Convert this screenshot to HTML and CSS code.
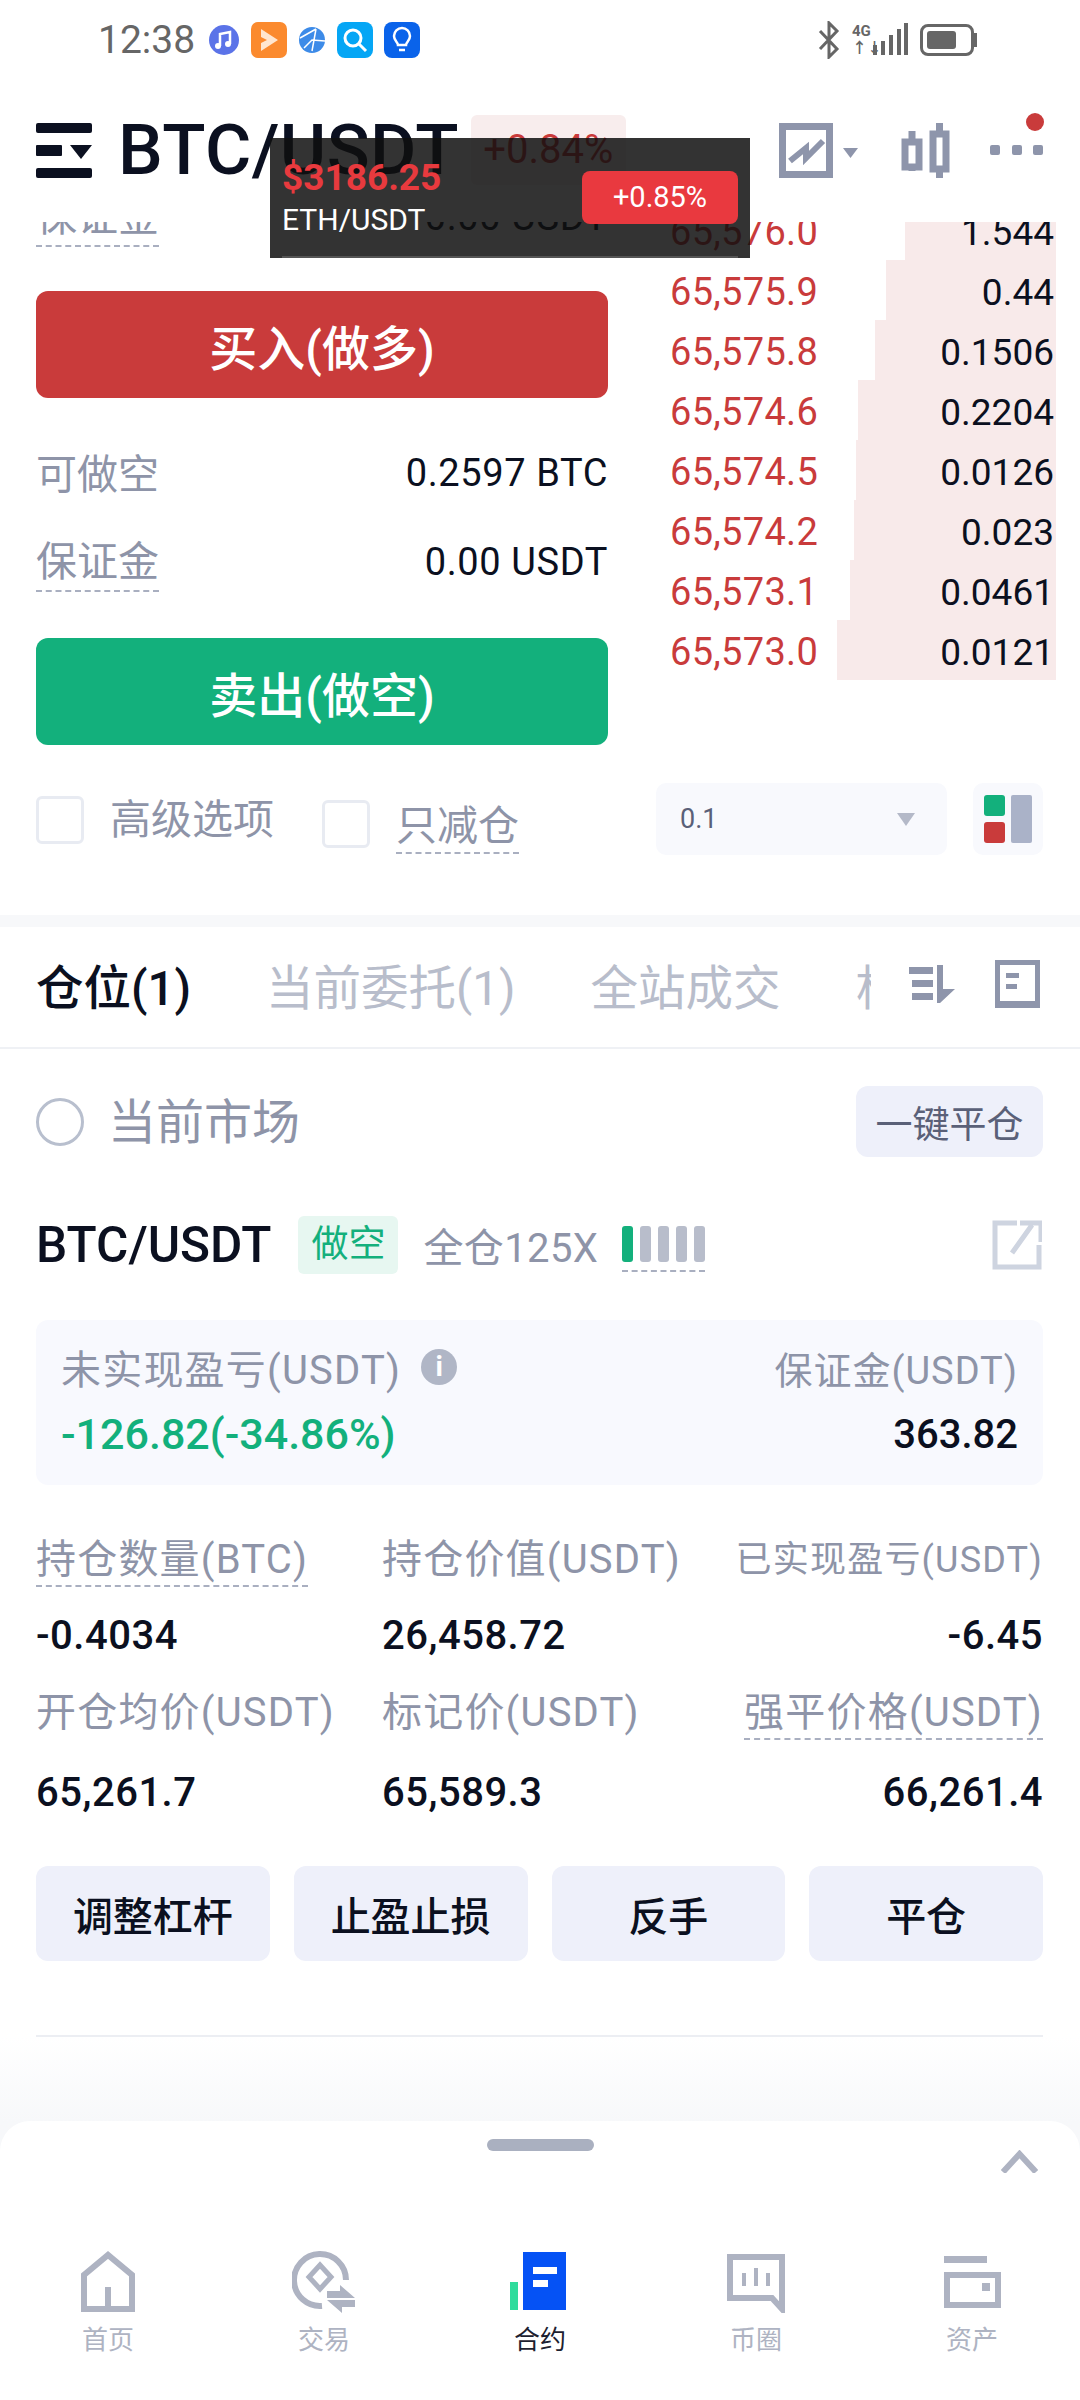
FILE: index.html
```html
<!DOCTYPE html>
<html lang="zh-CN">
<head>
    <meta charset="UTF-8">
    <meta name="viewport" content="width=device-width, initial-scale=1.0">
    <title>BTC/USDT 合约</title>
    <link rel="stylesheet" href="styles.css">
</head>
<body>
    <div class="status-bar">
        <span class="clock">12:38</span>
        <div class="app-icons">
            <svg width="32" height="36" viewBox="0 0 32 36"><circle cx="16" cy="18" r="15" fill="#5b73e8"/><path d="M12 24V12l10-2v12" fill="none" stroke="#fff" stroke-width="2.500"/><circle cx="10" cy="24" r="3" fill="#fff"/><circle cx="20" cy="22" r="3" fill="#fff"/></svg>
            <svg width="36" height="36" viewBox="0 0 36 36"><rect width="36" height="36" rx="7" fill="#fb8a2e"/><path d="M10 7l17 11-17 11V21l6-3-6-3z" fill="#ffe6cf"/></svg>
            <svg width="28" height="36" viewBox="0 0 28 36"><circle cx="14" cy="18" r="13" fill="#3d8be8"/><path d="M2 16l16-9M18 7l-4 22M6 26l8-8 13 1" stroke="#fff" stroke-width="1.500" fill="none"/></svg>
            <svg width="36" height="36" viewBox="0 0 36 36"><rect width="36" height="36" rx="8" fill="#05a6f5"/><circle cx="16" cy="16" r="8" fill="none" stroke="#fff" stroke-width="3"/><path d="M22 22l7 7" stroke="#fff" stroke-width="3"/></svg>
            <svg width="36" height="36" viewBox="0 0 36 36"><rect width="36" height="36" rx="8" fill="#0a63ea"/><path d="M14 23c0-3-4-4-4-9a8 8 0 0 1 16 0c0 5-4 6-4 9zM15 28h6" fill="none" stroke="#fff" stroke-width="2.500"/></svg>
        </div>
        <div class="system-icons">
            <svg width="24" height="38" viewBox="0 0 24 38"><path d="M3 10l17 18-8 8V2l8 8L3 28" fill="none" stroke="#666" stroke-width="3"/></svg>
            <div class="net"><span>4G</span><span>↑↓</span></div>
            <svg width="36" height="34" viewBox="0 0 36 34"><path d="M3 22v10M11 18v14M19 12v20M27 6v26M34 0v32" stroke="#666" stroke-width="4"/></svg>
            <div class="battery"><span class="battery-fill"></span></div>
            <span class="battery-nub"></span>
        </div>
    </div>

    <div class="header">
        <svg class="logo" width="56" height="55" viewBox="0 0 56 55"><rect width="56" height="10" rx="2" fill="#0b1020"/><rect y="22" width="26" height="11" rx="1" fill="#0b1020"/><path d="M34 22h22L45 36z" fill="#0b1020"/><rect y="45" width="56" height="10" rx="2" fill="#0b1020"/></svg>
        <span class="pair">BTC/USDT</span>
        <span class="change">+0.84%</span>
        <div class="header-tools">
            <svg width="54" height="55" viewBox="0 0 54 55"><rect x="3.500" y="3.500" width="47" height="48" fill="none" stroke="#8e95ab" stroke-width="7"/><path d="M11 38l16-13v10l17-17" fill="none" stroke="#8e95ab" stroke-width="6"/></svg>
            <svg class="caret" width="15" height="10" viewBox="0 0 15 10"><path d="M0 0h15L7.500 10z" fill="#8e95ab"/></svg>
            <svg class="candle" width="49" height="55" viewBox="0 0 49 55"><path d="M11 8v40M38.500 0v55" stroke="#8e95ab" stroke-width="7"/><rect x="4" y="19" width="14" height="25" fill="#fff" stroke="#8e95ab" stroke-width="7"/><rect x="32" y="11" width="13" height="35" fill="#fff" stroke="#8e95ab" stroke-width="7"/></svg>
            <div class="more"><i></i><i></i><i></i><b></b></div>
        </div>
    </div>

    <div class="scroll">
        <div class="trade">
            <div class="order-form">
                <div class="form-row"><span class="dashed">保证金</span><span class="form-value">0.00 USDT</span></div>
                <button class="action buy">买入(做多)</button>
                <div class="form-row first"><span>可做空</span><span class="form-value">0.2597 BTC</span></div>
                <div class="form-row"><span class="dashed">保证金</span><span class="form-value">0.00 USDT</span></div>
                <button class="action sell">卖出(做空)</button>
            </div>
            <div class="book" id="book">
                <div class="book-row"><span class="bar" style="width:151px"></span><span class="price">65,576.0</span><span class="qty">1.544</span></div>
                <div class="book-row"><span class="bar" style="width:170px"></span><span class="price">65,575.9</span><span class="qty">0.44</span></div>
                <div class="book-row"><span class="bar" style="width:181px"></span><span class="price">65,575.8</span><span class="qty">0.1506</span></div>
                <div class="book-row"><span class="bar" style="width:198px"></span><span class="price">65,574.6</span><span class="qty">0.2204</span></div>
                <div class="book-row"><span class="bar" style="width:200px"></span><span class="price">65,574.5</span><span class="qty">0.0126</span></div>
                <div class="book-row"><span class="bar" style="width:202px"></span><span class="price">65,574.2</span><span class="qty">0.023</span></div>
                <div class="book-row"><span class="bar" style="width:206px"></span><span class="price">65,573.1</span><span class="qty">0.0461</span></div>
                <div class="book-row"><span class="bar" style="width:219px"></span><span class="price">65,573.0</span><span class="qty">0.0121</span></div>
            </div>
        </div>

        <div class="options">
            <span class="check"></span>
            <span class="option-label">高级选项</span>
            <span class="check second"></span>
            <span class="option-label second"><span class="dashed">只减仓</span></span>
            <div class="select"><span>0.1</span><svg width="18" height="13" viewBox="0 0 18 13"><path d="M0 0h18L9 13z" fill="#b4b9c8"/></svg></div>
            <div class="layout-switch">
                <div class="switch-col"><i class="green"></i><i class="red"></i></div>
                <i class="gray"></i>
            </div>
        </div>

        <div class="band"></div>

        <div class="tabs">
            <span class="tab active">仓位(1)</span>
            <span class="tab">当前委托(1)</span>
            <span class="tab">全站成交</span>
            <span class="tab clipped"><span>杠杆</span></span>
            <svg class="tab-sort" width="46" height="38" viewBox="0 0 46 38"><path d="M0 2h24v7H0zM3 15h21v7H3zM3 28h21v7H3zM28 0h6v24h12L31 38h-3z" fill="#8e95ab"/></svg>
            <svg class="tab-doc" width="45" height="48" viewBox="0 0 45 48"><path d="M2.500 2.500h40v43h-40z" fill="none" stroke="#8e95ab" stroke-width="5"/><path d="M11 13h13v5H11zM11 24h11v5H11z" fill="#8e95ab"/><path d="M0 41h45v7H0z" fill="#8e95ab"/></svg>
        </div>

        <div class="market">
            <span class="radio"></span>
            <span class="market-label">当前市场</span>
            <button class="close-all">一键平仓</button>
        </div>

        <div class="position-head">
            <span class="position-pair">BTC/USDT</span>
            <span class="side">做空</span>
            <span class="leverage">全仓125X</span>
            <div class="risk"><i class="on"></i><i></i><i></i><i></i><i></i></div>
            <svg class="share" width="50" height="50" viewBox="0 0 50 50"><path d="M25 3H3v44h44V25" fill="none" stroke="#ced4e0" stroke-width="5"/><path d="M20 33L40 5M28 3h21v19" fill="none" stroke="#ced4e0" stroke-width="5"/></svg>
        </div>

        <div class="pnl-card">
            <div class="pnl-line">
                <span class="pnl-label">未实现盈亏(USDT)<span class="info">i</span></span>
                <span class="margin-label">保证金(USDT)</span>
            </div>
            <div class="pnl-line values">
                <span class="pnl-value">-126.82(-34.86%)</span>
                <span class="margin-value">363.82</span>
            </div>
        </div>

        <div class="stats">
            <div class="stat"><span class="stat-label"><span class="dashed">持仓数量(BTC)</span></span><span class="stat-value">-0.4034</span></div>
            <div class="stat"><span class="stat-label">持仓价值(USDT)</span><span class="stat-value">26,458.72</span></div>
            <div class="stat end"><span class="stat-label small">已实现盈亏(USDT)</span><span class="stat-value">-6.45</span></div>
            <div class="stat"><span class="stat-label">开仓均价(USDT)</span><span class="stat-value">65,261.7</span></div>
            <div class="stat"><span class="stat-label">标记价(USDT)</span><span class="stat-value">65,589.3</span></div>
            <div class="stat end"><span class="stat-label"><span class="dashed">强平价格(USDT)</span></span><span class="stat-value">66,261.4</span></div>
        </div>

        <div class="position-actions">
            <button>调整杠杆</button>
            <button>止盈止损</button>
            <button>反手</button>
            <button>平仓</button>
        </div>

        <div class="rule"></div>
        <div class="fade"></div>
    </div>

    <div class="sheet-wrap">
        <div class="sheet">
            <div class="sheet-top">
                <span class="handle"></span>
                <svg class="chevron" width="37" height="23" viewBox="0 0 37 23"><path d="M2 22L18.500 4 35 22" fill="none" stroke="#aeb3c2" stroke-width="6"/></svg>
            </div>
            <div class="nav">
                <div class="nav-item">
                    <svg width="64" height="64" viewBox="0 0 64 64"><path d="M8 60V26L32 6l24 20v34zM32 38v22" fill="none" stroke="#aeb3c2" stroke-width="6"/></svg>
                    <span>首页</span>
                </div>
                <div class="nav-item">
                    <svg width="64" height="64" viewBox="0 0 64 64"><path d="M54 31A26 26 0 1 0 30 57" fill="none" stroke="#aeb3c2" stroke-width="6"/><path d="M28 16l11 12-11 12-11-12z" fill="none" stroke="#aeb3c2" stroke-width="5"/><path d="M48 36l15 13H35v-7h13zM35 51h28v7H50v6z" fill="#aeb3c2"/></svg>
                    <span>交易</span>
                </div>
                <div class="nav-item active">
                    <svg width="64" height="64" viewBox="0 0 64 64"><rect x="2" y="33" width="8" height="28" fill="#2fdc9c"/><rect x="15" y="3" width="43" height="58" fill="#0552f5"/><rect x="25" y="18" width="24" height="7" fill="#fff"/><rect x="25" y="31" width="15" height="7" fill="#fff"/></svg>
                    <span>合约</span>
                </div>
                <div class="nav-item">
                    <svg width="64" height="64" viewBox="0 0 64 64"><path d="M6 8h52v52L48 49H6z" fill="none" stroke="#aeb3c2" stroke-width="6"/><path d="M20 24v13M32 19v18M44 24v13" stroke="#aeb3c2" stroke-width="4"/></svg>
                    <span>币圈</span>
                </div>
                <div class="nav-item">
                    <svg width="64" height="64" viewBox="0 0 64 64"><path d="M4 7h43v7H4z" fill="#aeb3c2"/><path d="M7 26h51v30H7z" fill="none" stroke="#aeb3c2" stroke-width="6"/><path d="M42 34h8v8h-8z" fill="#aeb3c2"/></svg>
                    <span>资产</span>
                </div>
            </div>
        </div>
    </div>

    <div class="ticker">
        <div class="ticker-text">
            <span class="ticker-price">$3186.25</span>
            <span class="ticker-pair">ETH/USDT</span>
        </div>
        <span class="ticker-change">+0.85%</span>
        <span class="ticker-line"></span>
    </div>
</body>
</html>
```

FILE: styles.css
```css
* {
    box-sizing: border-box;
}

body {
    font-family: Roboto, "Noto Sans CJK SC", sans-serif;
    background-color: #fff;
    color: #0b1020;
    margin: 0;
    padding: 0;
    width: 1080px;
    height: 2400px;
    overflow: hidden;
    position: relative;
}

button {
    font-family: inherit;
    border: none;
    padding: 0;
}

.status-bar {
    height: 80px;
    display: flex;
    align-items: center;
    padding: 0 103px 0 98px;
    color: #666;
}

.clock {
    font-size: 39px;
    width: 110px;
}

.app-icons {
    display: flex;
    align-items: center;
    gap: 11px;
}

.system-icons {
    margin-left: auto;
    display: flex;
    align-items: center;
}

.net {
    display: flex;
    flex-direction: column;
    font-size: 15px;
    line-height: 17px;
    font-weight: 700;
    width: 20px;
    margin-left: 11px;
}

.battery {
    width: 54px;
    height: 32px;
    border: 3px solid #666;
    border-radius: 8px;
    padding: 4px;
    margin-left: 12px;
}

.battery-fill {
    display: block;
    width: 29px;
    height: 18px;
    background-color: #666;
    border-radius: 3px;
}

.battery-nub {
    width: 3px;
    height: 14px;
    background-color: #666;
}

.header {
    height: 142px;
    display: flex;
    align-items: center;
    padding: 0 37px 2px 36px;
}

.pair {
    font-size: 71px;
    font-weight: 500;
    margin-left: 26px;
    line-height: 80px;
    letter-spacing: 0.4px;
}

.change {
    font-size: 40px;
    color: #c93b3b;
    background-color: #f8eded;
    border-radius: 6px;
    width: 155px;
    height: 70px;
    line-height: 70px;
    text-align: center;
    margin-left: 12px;
}

.header-tools {
    margin-left: auto;
    display: flex;
    align-items: center;
}

.caret {
    margin: 6px 0 0 10px;
}

.candle {
    margin-left: 43px;
}

.more {
    margin-left: 40px;
    width: 53px;
    display: flex;
    justify-content: space-between;
    position: relative;
}

.more i {
    width: 10px;
    height: 10px;
    background-color: #8e95ab;
    border-radius: 2px;
}

.more b {
    position: absolute;
    right: -1px;
    top: -32px;
    width: 18px;
    height: 18px;
    border-radius: 50%;
    background-color: #c93b3b;
}

.scroll {
    height: 1899px;
    overflow: hidden;
}

.trade {
    margin-top: -37px;
    padding-left: 36px;
    display: flex;
    align-items: flex-start;
}

.order-form {
    width: 572px;
    height: 560px;
}

.form-row {
    height: 60px;
    display: flex;
    justify-content: space-between;
    align-items: center;
    font-size: 41px;
    color: #8e94a8;
    margin-bottom: 29px;
}

.form-row.first {
    margin-top: 43px;
}

.form-value {
    font-size: 38px;
    color: #0b1020;
    letter-spacing: 0.6px;
    padding-top: 3px;
}

.dashed {
    border-bottom: 2px dashed #a9afc0;
    padding-bottom: 2px;
}

.action {
    display: block;
    width: 100%;
    height: 107px;
    border-radius: 12px;
    color: #fff;
    font-size: 48px;
    font-weight: 500;
}

.buy {
    background-color: #c93b3b;
    margin-top: 46px;
}

.sell {
    background-color: #13b07c;
    margin-top: 48px;
}

.book {
    width: 448px;
    padding-top: 15px;
}

.book-row {
    height: 60px;
    position: relative;
    display: flex;
    align-items: center;
    justify-content: space-between;
    padding: 4px 2px 0 62px;
    font-size: 38px;
}

.bar {
    position: absolute;
    right: 0;
    top: 0;
    bottom: 0;
    background-color: #f8eaea;
}

.price {
    color: #c93b3b;
    position: relative;
    letter-spacing: 0.3px;
}

.qty {
    position: relative;
    font-size: 37px;
}

.options {
    margin-top: 38px;
    height: 72px;
    padding: 0 37px 0 36px;
    display: flex;
    align-items: flex-start;
}

.check {
    width: 48px;
    height: 48px;
    border: 3px solid #e8ebf2;
    border-radius: 6px;
    margin-top: 13px;
    flex-shrink: 0;
}

.check.second {
    margin: 17px 0 0 48px;
}

.option-label {
    font-size: 41px;
    color: #8e94a8;
    margin-left: 26px;
    line-height: 50px;
    margin-top: 12px;
}

.option-label.second {
    margin-top: 18px;
}

.select {
    margin-left: auto;
    width: 291px;
    height: 72px;
    background-color: #f8f9fd;
    border-radius: 10px;
    display: flex;
    align-items: center;
    justify-content: space-between;
    padding: 0 32px 0 24px;
    font-size: 27px;
    color: #5a6078;
}

.layout-switch {
    width: 70px;
    height: 72px;
    margin-left: 26px;
    background-color: #f8f9fd;
    border-radius: 10px;
    display: flex;
    gap: 6px;
    padding: 12px 11px;
}

.switch-col {
    width: 21px;
    display: flex;
    flex-direction: column;
    gap: 6px;
}

.switch-col i {
    flex: 1;
    border-radius: 3px;
}

.green {
    background-color: #13b07c;
}

.red {
    background-color: #c93b3b;
}

.gray {
    width: 21px;
    background-color: #aab2c8;
    border-radius: 2px;
}

.band {
    height: 12px;
    margin-top: 60px;
    background-color: #f7f8fa;
}

.tabs {
    height: 122px;
    border-bottom: 2px solid #eff1f5;
    padding: 0 40px 6px 36px;
    display: flex;
    align-items: center;
    font-size: 47.500px;
    color: #b8bdcb;
}

.tab {
    margin-right: 75px;
    white-space: nowrap;
}

.tab.active {
    color: #0b1020;
    font-weight: 500;
}

.tab.clipped {
    margin-right: 38px;
    width: 15px;
    overflow: hidden;
    flex-shrink: 0;
}

.tab-sort {
    flex-shrink: 0;
}

.tab-doc {
    margin-left: auto;
    flex-shrink: 0;
}

.market {
    margin-top: 37px;
    height: 71px;
    padding: 0 37px 0 36px;
    display: flex;
    align-items: center;
}

.radio {
    width: 48px;
    height: 48px;
    border: 3px solid #b8bfce;
    border-radius: 50%;
}

.market-label {
    font-size: 48px;
    color: #8e94a8;
    margin-left: 24px;
    padding-bottom: 7px;
}

.close-all {
    margin-left: auto;
    width: 187px;
    height: 71px;
    background-color: #eef0fa;
    border-radius: 12px;
    font-size: 37px;
    color: #5a6078;
}

.position-head {
    margin-top: 59px;
    height: 58px;
    padding: 0 38px 0 36px;
    display: flex;
    align-items: center;
}

.position-pair {
    font-size: 49.500px;
    font-weight: 500;
}

.side {
    width: 100px;
    height: 58px;
    line-height: 58px;
    text-align: center;
    margin-left: 27px;
    background-color: #e7f7f1;
    color: #13b07c;
    font-size: 37px;
    border-radius: 6px;
}

.leverage {
    font-size: 40px;
    color: #8e94a8;
    margin-left: 25px;
    letter-spacing: 0.4px;
}

.risk {
    display: flex;
    gap: 7px;
    margin-left: 24px;
    padding-bottom: 8px;
    border-bottom: 2px dashed #a9afc0;
    margin-top: 8px;
}

.risk i {
    width: 11px;
    height: 36px;
    background-color: #b8bdcb;
    border-radius: 3px;
}

.risk i.on {
    background-color: #13b07c;
}

.share {
    margin-left: auto;
}

.pnl-card {
    margin: 46px 37px 0 36px;
    height: 165px;
    background-color: #f8f9fe;
    border-radius: 12px;
    padding: 16px 25px;
}

.pnl-line {
    display: flex;
    justify-content: space-between;
    align-items: center;
    height: 62px;
}

.pnl-line.values {
    margin-top: 5px;
}

.pnl-label {
    font-size: 40px;
    color: #8e94a8;
    letter-spacing: 1.200px;
    display: flex;
    align-items: center;
}

.info {
    width: 36px;
    height: 36px;
    margin-left: 20px;
    border-radius: 50%;
    background-color: #b0b6c6;
    color: #fff;
    font-size: 28px;
    font-weight: 700;
    line-height: 36px;
    text-align: center;
    letter-spacing: 0;
}

.margin-label {
    font-size: 38px;
    color: #8e94a8;
    letter-spacing: 1px;
}

.pnl-value {
    font-size: 43px;
    font-weight: 500;
    color: #13b07c;
}

.margin-value {
    font-size: 40px;
    font-weight: 500;
}

.stats {
    margin: 47px 37px 0 36px;
    display: grid;
    grid-template-columns: 346px 1fr auto;
    row-gap: 19px;
}

.stat {
    display: flex;
    flex-direction: column;
}

.stat.end {
    text-align: right;
}

.stat-label {
    height: 56px;
    line-height: 56px;
    font-size: 40px;
    color: #8e94a8;
    letter-spacing: 1.200px;
    white-space: nowrap;
}

.stat-label.small {
    font-size: 36px;
}

.stat-value {
    margin-top: 18px;
    height: 60px;
    line-height: 60px;
    font-size: 40px;
    font-weight: 500;
    letter-spacing: 0.5px;
}

.stat:nth-child(n+4) .stat-value {
    margin-top: 22px;
}

.position-actions {
    margin: 43px 37px 0 36px;
    display: grid;
    grid-template-columns: repeat(4, 1fr);
    gap: 24px;
}

.position-actions button {
    height: 95px;
    background-color: #eef0fa;
    border-radius: 12px;
    font-size: 40px;
    font-weight: 500;
    color: #0b1020;
}

.rule {
    height: 2px;
    margin: 74px 37px 0 36px;
    background-color: #eceef3;
}

.fade {
    height: 85px;
    background: linear-gradient(#fff, #f7f8fa);
}

.sheet-wrap {
    background-color: #f7f8fa;
}

.sheet {
    height: 279px;
    background-color: #fff;
    border-radius: 30px 30px 0 0;
    padding-top: 18px;
}

.sheet-top {
    display: grid;
    grid-template-columns: 1fr auto 1fr;
    height: 34px;
    padding-right: 42px;
}

.handle {
    grid-column: 2;
    width: 107px;
    height: 12px;
    border-radius: 6px;
    background-color: #aab0c0;
    margin-left: 43px;
}

.chevron {
    justify-self: end;
    margin-top: 11px;
}

.nav {
    margin-top: 76px;
    display: grid;
    grid-template-columns: repeat(5, 216px);
}

.nav-item {
    display: flex;
    flex-direction: column;
    align-items: center;
    font-size: 26px;
    color: #aeb3c2;
}

.nav-item span {
    margin-top: 12px;
    line-height: 30px;
}

.nav-item.active {
    color: #1d2130;
}

.ticker {
    position: absolute;
    left: 270px;
    top: 138px;
    width: 480px;
    height: 120px;
    background-color: rgba(15, 15, 15, 0.85);
    display: flex;
    justify-content: space-between;
    padding: 18px 12px 0;
}

.ticker-text {
    display: flex;
    flex-direction: column;
}

.ticker-price {
    font-size: 37px;
    font-weight: 700;
    color: #e83a3e;
    line-height: 44px;
}

.ticker-pair {
    font-size: 30px;
    color: #fff;
    line-height: 36px;
    margin-top: 2px;
}

.ticker-change {
    width: 156px;
    height: 53px;
    margin-top: 15px;
    background-color: #e9393f;
    border-radius: 8px;
    color: #fff;
    font-size: 29px;
    line-height: 53px;
    text-align: center;
}

.ticker-line {
    position: absolute;
    left: 12px;
    right: 12px;
    bottom: 0;
    height: 2px;
    background-color: #555;
}
```
